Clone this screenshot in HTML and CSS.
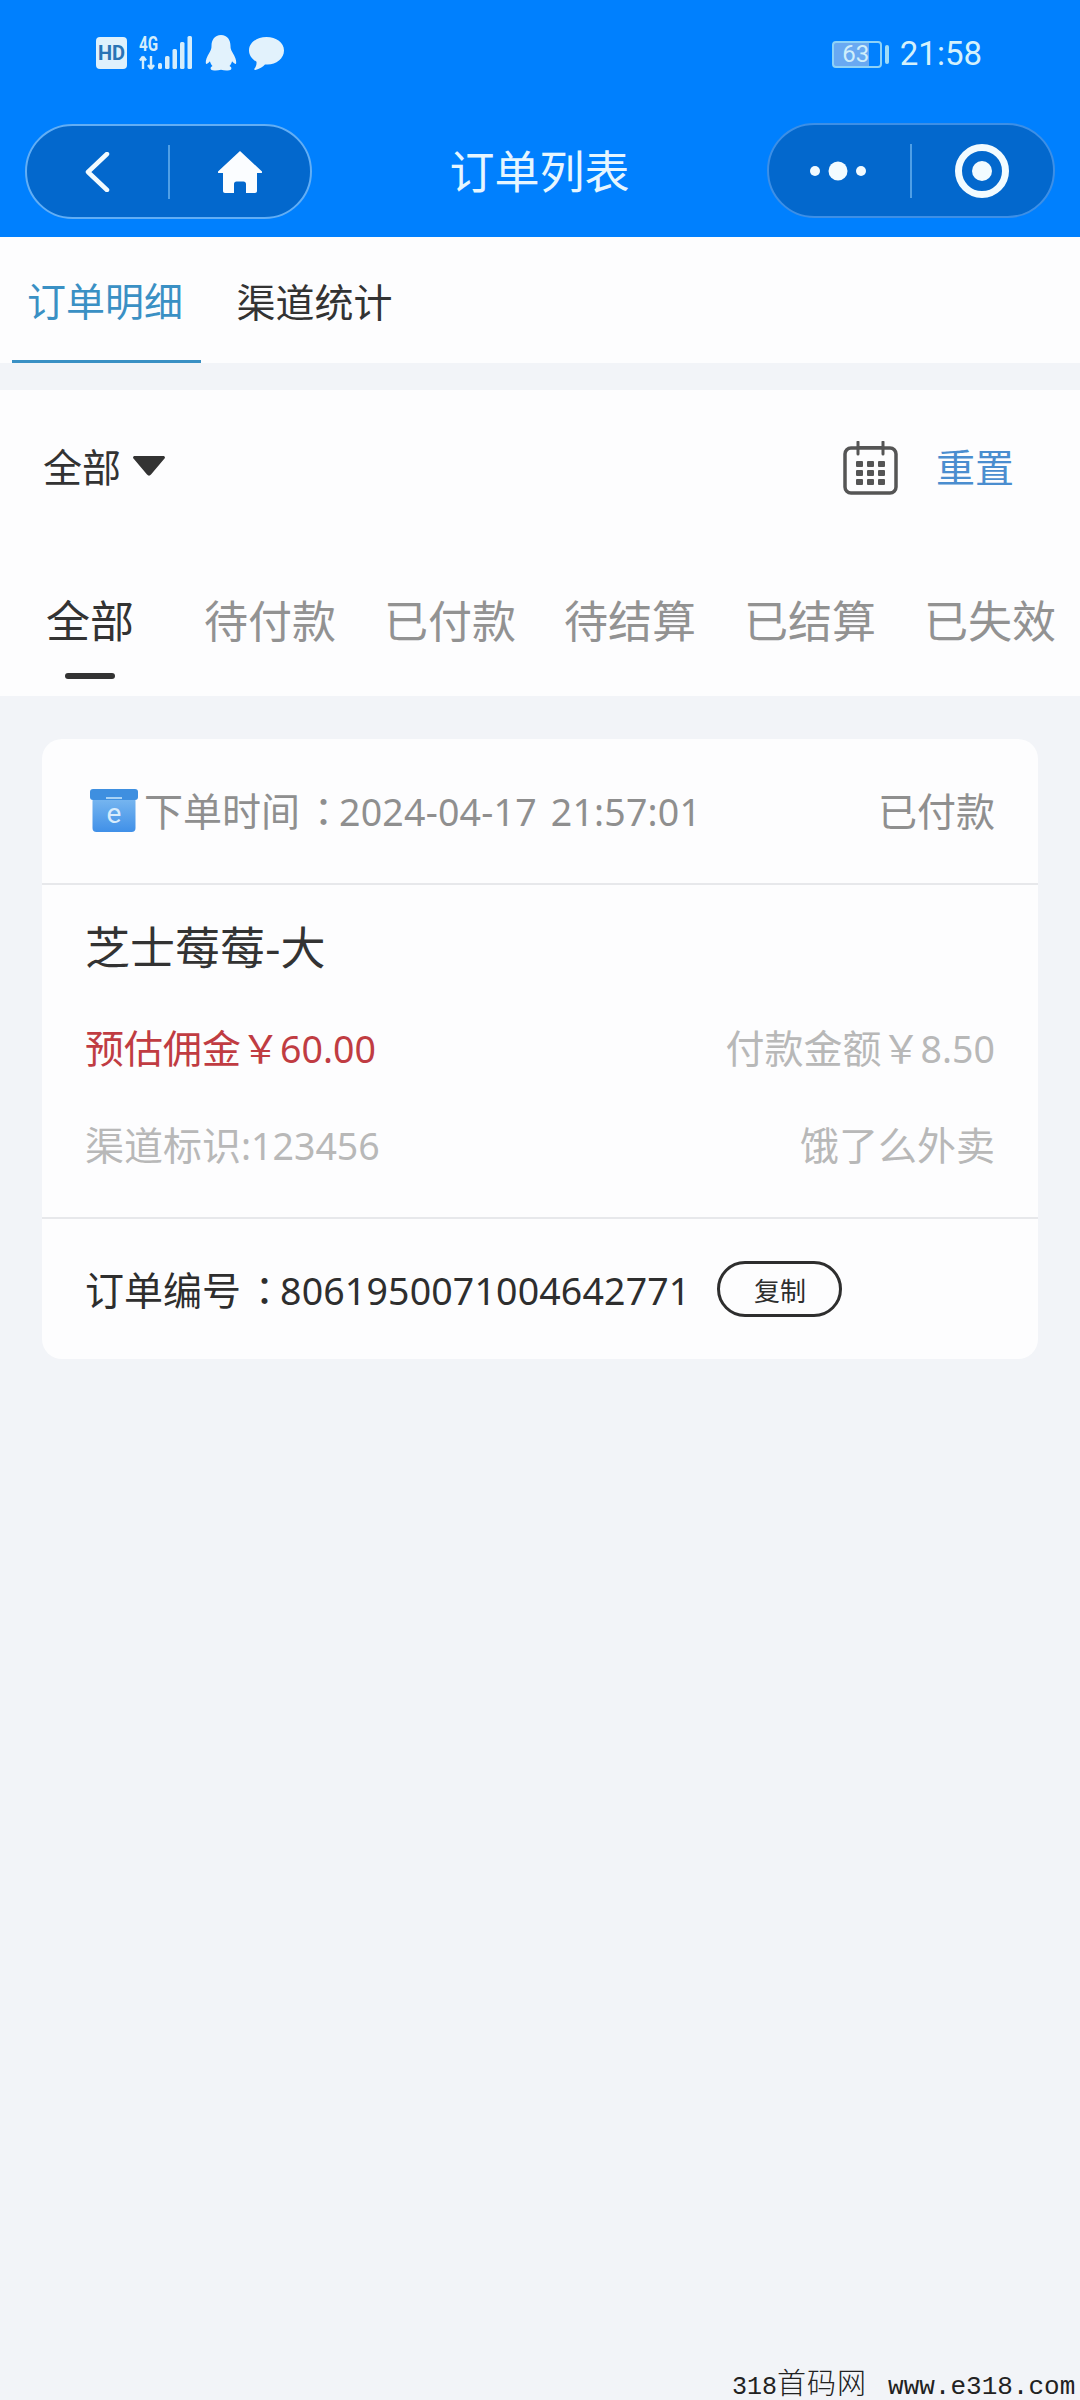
FILE: index.html
```html
<!DOCTYPE html>
<html lang="zh-CN">
<head>
<meta charset="utf-8">
<title>订单列表</title>
<link rel="stylesheet" href="styles.css">
</head>
<body>
<div class="app">
  <header class="topbar">
    <div class="status">
      <div class="status-left">
        <span class="hd">HD</span>
        <svg class="signal" width="54" height="34" viewBox="0 0 54 34">
          <text x="0" y="15" class="net" textLength="19" lengthAdjust="spacingAndGlyphs">4G</text>
          <path d="M4 33V21M4 20.500l-3 4M4 20.500l3 4M12 20v12M12 33l-3-4M12 33l3-4" fill="none" stroke="#d5edfb" stroke-width="2.400"/>
          <rect x="19" y="27" width="4" height="6" rx="1.500" fill="#d5edfb"/>
          <rect x="26" y="20" width="4.500" height="13" rx="1.500" fill="#d5edfb"/>
          <rect x="33.500" y="13" width="4.500" height="20" rx="1.500" fill="#d5edfb"/>
          <rect x="41" y="6" width="4.500" height="27" rx="1.500" fill="#d5edfb"/>
          <rect x="48.500" y="0" width="4.500" height="33" rx="1.500" fill="#d5edfb"/>
        </svg>
        <svg class="qq" width="32" height="36" viewBox="0 0 32 36">
          <path d="M16 0C9.500 0 6.500 5 6.500 11c0 2.500-.5 4-2 6.500C2 21.500.5 25 .8 28c.2 1.200 1.200 1.200 2.700-.2.800-.8 1.200-1.300 1.500-1.300.3 1.300 1.200 3.200 2.500 4.500C5.800 31.800 5 33 6 34.500c1 1 6 1.500 10 .2 4 1.300 9 .8 10-.2 1-1.500.2-2.700-1.500-3.500 1.300-1.300 2.200-3.200 2.500-4.500.3 0 .7.500 1.500 1.300 1.500 1.400 2.500 1.400 2.700.2.300-3-1.200-6.500-3.700-10.500-1.500-2.500-2-4-2-6.500C25.500 5 22.500 0 16 0z" fill="#e2f2fc"/>
        </svg>
        <svg class="chat" width="35" height="33" viewBox="0 0 35 33">
          <path d="M17.500 0C7.800 0 0 5.800 0 13.500c0 4.800 3 8.800 7.500 11.200.3 2.600-.6 5-2.100 7-.5.800.2 1.500 1 1.200 4-1 7.500-3.200 9.600-5.500.8.100 1.600.1 2.500.1C27.200 27.500 35 21.500 35 13.500S27.200 0 17.500 0z" fill="#e2f2fc"/>
        </svg>
      </div>
      <div class="status-right">
        <span class="battery">63</span>
        <span class="battery-tip"></span>
        <span class="clock">21:58</span>
      </div>
    </div>
    <nav class="nav">
      <div class="capsule">
        <span class="cell">
          <svg width="25" height="40" viewBox="0 0 25 40"><path d="M22 2 3 20l19 18" fill="none" stroke="#f2fbff" stroke-width="4.500" stroke-linecap="round" stroke-linejoin="round"/></svg>
        </span>
        <span class="rule"></span>
        <span class="cell">
          <svg width="44" height="42" viewBox="0 0 44 42"><path d="M22 0 44 20.500c.5.800 0 1.500-1 1.500h-4v18c0 1.200-.8 2-2 2h-9V33c0-1.500-1-2.500-2.500-2.500h-7C17 30.500 16 31.500 16 33v9H7c-1.200 0-2-.8-2-2V22H1c-1 0-1.500-.7-1-1.500z" fill="#fbfdff"/></svg>
        </span>
      </div>
      <h1 class="title">订单列表</h1>
      <div class="capsule capsule-right">
        <span class="cell">
          <svg class="dots" width="58" height="20" viewBox="0 0 58 20"><circle cx="6" cy="10" r="5" fill="#f2fbff"/><circle cx="29" cy="10" r="9.500" fill="#f2fbff"/><circle cx="52" cy="10" r="5" fill="#f2fbff"/></svg>
        </span>
        <span class="rule"></span>
        <span class="cell">
          <svg width="54" height="54" viewBox="0 0 54 54"><circle cx="27" cy="27" r="23.500" fill="none" stroke="#f2fbff" stroke-width="7"/><circle cx="27" cy="27" r="10" fill="#f2fbff"/></svg>
        </span>
      </div>
    </nav>
  </header>

  <div class="tabs">
    <span class="tab tab-on">订单明细</span>
    <span class="tab">渠道统计</span>
  </div>

  <section class="filters">
    <div class="filter-row">
      <div class="picker">
        <span class="lift">全部</span>
        <svg width="32" height="20" viewBox="0 0 32 20"><path d="M2 0h28c2 0 2.500 1.500 1.300 2.800L18 18.500c-1.200 1.500-2.800 1.500-4 0L.7 2.800C-.5 1.500 0 0 2 0z" fill="#333"/></svg>
      </div>
      <div class="tools">
        <svg class="cal" width="55" height="54" viewBox="0 0 55 54">
          <rect x="2" y="7" width="51" height="45" rx="6" fill="none" stroke="#555" stroke-width="3.500"/>
          <path d="M15 1v12M40 1v12" stroke="#555" stroke-width="3" stroke-linecap="round"/>
          <path d="M15 6h25" stroke="#555" stroke-width="2"/>
          <g fill="#555">
            <rect x="13" y="20" width="7" height="6" rx="1"/><rect x="24" y="20" width="7" height="6" rx="1"/><rect x="35" y="20" width="7" height="6" rx="1"/>
            <rect x="13" y="29" width="7" height="6" rx="1"/><rect x="24" y="29" width="7" height="6" rx="1"/><rect x="35" y="29" width="7" height="6" rx="1"/>
            <rect x="13" y="38" width="7" height="6" rx="1"/><rect x="24" y="38" width="7" height="6" rx="1"/><rect x="35" y="38" width="7" height="6" rx="1"/>
          </g>
        </svg>
        <span class="reset lift">重置</span>
      </div>
    </div>
    <div class="states">
      <span class="state state-on">全部</span>
      <span class="state">待付款</span>
      <span class="state">已付款</span>
      <span class="state">待结算</span>
      <span class="state">已结算</span>
      <span class="state">已失效</span>
    </div>
  </section>

  <article class="card">
    <div class="card-head">
      <div class="when">
        <svg width="48" height="44" viewBox="0 0 48 44">
          <defs><linearGradient id="box" x1="0" y1="0" x2="0" y2="1"><stop offset="0" stop-color="#7ab8f0"/><stop offset="1" stop-color="#4090e8"/></linearGradient></defs>
          <rect x="2.500" y="8" width="43" height="35" rx="4" fill="url(#box)"/>
          <rect x="0" y="0" width="48" height="11" rx="3" fill="#3e8fe0"/>
          <rect x="16" y="8" width="16" height="2" fill="#a8d2f5"/>
          <text x="24" y="34" class="box-e">e</text>
        </svg>
        <span>下单时间<span class="colon">：</span><span class="num num-date">2024-04-17 21:57:01</span></span>
      </div>
      <span>已付款</span>
    </div>
    <div class="card-body">
      <div class="goods">芝士莓莓-大</div>
      <div class="line line-money">
        <span class="commission">预估佣金￥<span class="num">60.00</span></span>
        <span>付款金额￥<span class="num">8.50</span></span>
      </div>
      <div class="line line-source">
        <span>渠道标识<span class="num">:123456</span></span>
        <span>饿了么外卖</span>
      </div>
    </div>
    <div class="card-foot">
      <span class="order-no">订单编号<span class="colon">：</span><span class="num num-order">8061950071004642771</span></span>
      <span class="copy">复制</span>
    </div>
  </article>

  <div class="mark"><span class="mark-cn"><span class="mark-digits">318</span>首码网</span><span class="mark-url">www.e318.com</span></div>
</div>
</body>
</html>
```
FILE: styles.css
```css
* { box-sizing: border-box; }
html, body { margin: 0; padding: 0; }
body { font-family: "Noto Sans CJK SC", "Noto Sans", sans-serif; color: #2e2e2e; }

.app { position: relative; width: 1080px; height: 2400px; overflow: hidden; background: #f2f4f8; }

.topbar { height: 237px; background: #0080fe; padding-top: 35px; }
.status { height: 88px; display: flex; justify-content: space-between; align-items: flex-start; padding: 0 98px 0 96px; }
.status-left { display: flex; align-items: center; gap: 12px; height: 36px; }
.signal { overflow: visible; }
.hd { width: 31px; height: 32px; border-radius: 4px; background: #dff1fc; color: #2a74b5; font: 700 20px/32px "Roboto", sans-serif; text-align: center; }
.net { font: 700 20px "Roboto", sans-serif; fill: #d5edfb; }
.status-right { display: flex; align-items: center; height: 36px; padding-top: 2px; }
.battery { width: 50px; height: 27px; border: 2px solid #8ed2f7; border-radius: 4px; background: linear-gradient(to right, #69a9f2 0 76%, transparent 76%); color: #cfeefb; font: 400 24px/23px "Roboto", sans-serif; text-align: center; padding-right: 2px; }
.battery-tip { width: 4px; height: 19px; border-radius: 2px; background: #9fdcf8; margin-left: 3px; }
.clock { margin-left: 11px; color: #d4f1fc; font: 400 33px/36px "Roboto", sans-serif; }

.nav { display: flex; justify-content: space-between; align-items: center; padding: 0 25px; }
.capsule { width: 287px; height: 95px; display: flex; align-items: center; border: 2px solid #62aef5; border-radius: 48px; background: #0368cd; }
.capsule-right { width: 288px; border-color: #3d8fe6; margin-bottom: 2px; }
.cell { flex: 1; display: flex; justify-content: center; align-items: center; }
.dots { margin-right: 2px; }
.rule { width: 2px; height: 54px; background: #4f9fe6; }
.title { margin: 0 0 3px; font-size: 45px; line-height: 60px; font-weight: 400; color: #e6f6ff; }

.tabs { height: 126px; display: flex; gap: 19px; padding-left: 12px; background: #fdfdfe; }
.tab { width: 189px; display: flex; justify-content: center; align-items: center; font-size: 39px; color: #333; }
.tab-on { color: #3a90c4; border-bottom: 3px solid #3a90c4; padding-right: 3px; }

.filters { margin-top: 27px; height: 306px; padding-top: 52px; background: #fdfdfe; }
.filter-row { height: 54px; display: flex; justify-content: space-between; align-items: center; padding: 0 66px 0 43px; }
.picker { display: flex; align-items: center; gap: 12px; font-size: 39px; line-height: 54px; color: #333; }
.picker svg { margin-bottom: 6px; }
.lift { margin-bottom: 8px; }
.tools { display: flex; align-items: center; gap: 38px; }
.cal { margin-bottom: 2px; }
.reset { font-size: 39px; line-height: 54px; color: #4a8dcf; }
.states { display: grid; grid-template-columns: repeat(6, 180px); margin-top: 96px; }
.state { display: flex; flex-direction: column; align-items: center; font-size: 44px; line-height: 54px; color: #929292; }
.state::after { content: ""; width: 50px; height: 6px; margin-top: 27px; border-radius: 3px; background: transparent; }
.state-on { color: #333; }
.state-on::after { background: #333; }

.num { font-family: "Noto Sans", sans-serif; font-size: 37.500px; line-height: 1; }
.num-date { letter-spacing: .2px; word-spacing: 4px; }
.num-order { letter-spacing: .15px; }
.colon { display: inline-block; padding-left: 4px; letter-spacing: -4px; font-family: "Noto Sans CJK TC", sans-serif; line-height: 1; }

.card { margin: 43px 42px 0; border-radius: 20px; background: #fdfdfe; }
.card-head { height: 146px; display: flex; justify-content: space-between; align-items: center; padding: 0 43px 5px 48px; border-bottom: 2px solid #e7e8eb; font-size: 39px; color: #8f8f8f; }
.when { display: flex; align-items: center; gap: 6px; }
.when svg { margin-top: 5px; }
.box-e { font: 400 28px "Roboto", sans-serif; fill: #d8ecfc; text-anchor: middle; }
.card-body { height: 334px; padding: 31px 43px 0 43px; border-bottom: 2px solid #e7e8eb; font-size: 39px; color: #b8b8b8; }
.goods { font-size: 45px; line-height: 60px; color: #333; }
.line { display: flex; justify-content: space-between; line-height: 60px; }
.line-money { margin-top: 40px; }
.line-source { margin-top: 37px; }
.commission { color: #c03c42; }
.card-foot { height: 140px; display: flex; align-items: center; padding: 0 0 0 43px; }
.order-no { margin-bottom: 3px; font-size: 39px; line-height: 60px; color: #2e2e2e; }
.copy { width: 125px; height: 56px; margin-left: 27px; display: flex; justify-content: center; align-items: center; border: 3px solid #2e2e2e; border-radius: 28px; font-size: 26px; color: #2e2e2e; }

.mark { position: absolute; left: 732px; top: 2363px; display: flex; align-items: baseline; gap: 21px; color: #222; white-space: nowrap; }
.mark-cn { font: 300 29px/36px "Noto Sans CJK SC", sans-serif; letter-spacing: 1px; }
.mark-digits { font: 400 25px/36px "Liberation Mono", monospace; letter-spacing: 0; }
.mark-url { font: 400 26px/36px "Liberation Mono", monospace; }
```
